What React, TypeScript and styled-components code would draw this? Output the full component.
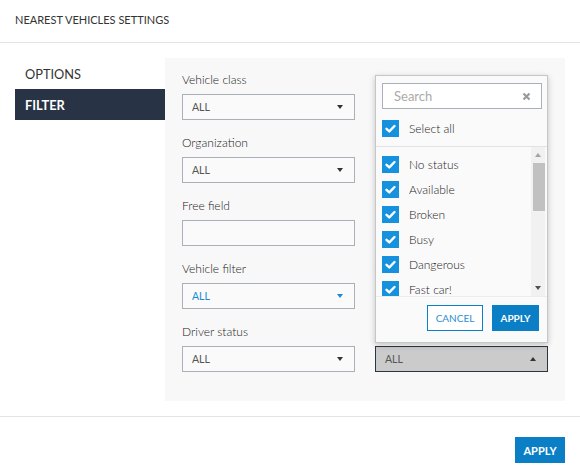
import styled, { createGlobalStyle } from "styled-components";

const colors = {
  text: "#333333",
  navy: "#283445",
  blue: "#0a7fc6",
  lightBlue: "#1a8ad4",
  check: "#1591dd",
  border: "#a9b0b8",
  line: "#e4e4e4",
  panel: "#f8f8f8",
};

const GlobalStyle = createGlobalStyle`
  body {
    margin: 0;
    background: white;
    font-family: Lato, "Liberation Sans", sans-serif;
    color: ${colors.text};
  }
`;

const Dialog = styled.div`
  width: 580px;
  height: 476px;
  display: flex;
  flex-direction: column;
  overflow: hidden;
`;

const Header = styled.div`
  flex-shrink: 0;
  height: 43px;
  box-sizing: border-box;
  padding: 0 15px 3px;
  display: flex;
  align-items: center;
  border-bottom: 1px solid ${colors.line};
  font-size: 11px;
  text-transform: uppercase;
`;

const Body = styled.div`
  flex-shrink: 0;
  display: flex;
  padding: 15px;
`;

const Nav = styled.div`
  width: 150px;
  display: flex;
  flex-direction: column;
`;

const NavItem = styled.div<{ $active?: boolean }>`
  height: 31px;
  padding-left: 10px;
  display: flex;
  align-items: center;
  font-size: 12.8px;
  text-transform: uppercase;
  background: ${(p) => (p.$active ? colors.navy : "transparent")};
  color: ${(p) => (p.$active ? "white" : colors.text)};
  font-weight: ${(p) => (p.$active ? 700 : 400)};
`;

const Panel = styled.div`
  flex: 1;
  background: ${colors.panel};
  padding: 14px 17px 29px;
  display: grid;
  grid-template-columns: 173px 173px;
  column-gap: 20px;
  row-gap: 15px;
  align-content: start;
`;

const Field = styled.div`
  position: relative;
  display: flex;
  flex-direction: column;
  gap: 6px;
`;

const Label = styled.div`
  font-size: 12px;
  line-height: 16px;
  font-weight: 300;
  color: #222;
  white-space: nowrap;
`;

const SelectBox = styled.div<{ $open?: boolean; $highlight?: boolean }>`
  height: 26px;
  box-sizing: border-box;
  padding: 0 11px 0 9px;
  display: flex;
  align-items: center;
  justify-content: space-between;
  border: 1px solid ${(p) => (p.$open ? "#2c3542" : colors.border)};
  background: ${(p) => (p.$open ? "#cbcbcb" : "#fafafa")};
  color: ${(p) => (p.$highlight ? colors.lightBlue : "#555")};
  font-size: 10.5px;
  text-transform: uppercase;
`;

const Caret = styled.span<{ $up?: boolean; $color: string }>`
  width: 0;
  height: 0;
  border-left: 3.5px solid transparent;
  border-right: 3.5px solid transparent;
  border-top: ${(p) => (p.$up ? "none" : `4px solid ${p.$color}`)};
  border-bottom: ${(p) => (p.$up ? `4px solid ${p.$color}` : "none")};
`;

const TextInput = styled.input`
  height: 26px;
  box-sizing: border-box;
  margin: 0;
  border: 1px solid ${colors.border};
  background: #fafafa;
  outline: none;
`;

const Popup = styled.div`
  position: absolute;
  left: 0;
  right: 0;
  bottom: 29px;
  height: 268px;
  box-sizing: border-box;
  z-index: 2;
  display: flex;
  flex-direction: column;
  background: #fafafa;
  border: 1px solid #c6c6c6;
  box-shadow: 0 2px 6px rgba(0, 0, 0, 0.22);
`;

const SearchBox = styled.div`
  margin: 7px 5px 0 6px;
  height: 26px;
  flex-shrink: 0;
  box-sizing: border-box;
  padding: 0 10px 0 11px;
  display: flex;
  align-items: center;
  justify-content: space-between;
  border: 1px solid ${colors.border};
  background: white;
  font-size: 13px;
  color: #aaa;
`;

const SelectAll = styled.div`
  flex-shrink: 0;
  padding: 7px 0 5px 6px;
  border-bottom: 1px solid #e2e2e2;
`;

const CheckRow = styled.div`
  height: 25px;
  flex-shrink: 0;
  display: flex;
  align-items: center;
  gap: 10px;
  font-size: 12px;
  font-weight: 300;
  color: #222;
`;

const ListArea = styled.div`
  height: 149px;
  flex-shrink: 0;
  display: flex;
  border-bottom: 1px solid #ececec;
`;

const Items = styled.div`
  flex: 1;
  overflow: hidden;
  padding: 5px 0 0 6px;
  display: flex;
  flex-direction: column;
`;

const Scrollbar = styled.div`
  width: 14px;
  margin-right: 2px;
  display: flex;
  flex-direction: column;
  align-items: flex-end;
  background: #f1f1f1;
`;

const ScrollArrow = styled.div`
  width: 14px;
  height: 16px;
  display: flex;
  align-items: center;
  justify-content: center;
`;

const Thumb = styled.div`
  width: 12px;
  height: 48px;
  background: #c1c1c1;
`;

const Spacer = styled.div`
  flex: 1;
`;

const PopupFooter = styled.div`
  display: flex;
  justify-content: flex-end;
  gap: 9px;
  padding: 8px 8px 0 0;
`;

const Button = styled.button<{ $outline?: boolean; $width: number; $size: number }>`
  width: ${(p) => p.$width}px;
  height: 26px;
  box-sizing: border-box;
  margin: 0;
  padding: 0;
  white-space: nowrap;
  border: 1px solid ${colors.blue};
  border-radius: 0;
  background: ${(p) => (p.$outline ? "white" : colors.blue)};
  color: ${(p) => (p.$outline ? "#2b8ed3" : "white")};
  font-family: Lato, "Liberation Sans", sans-serif;
  font-size: ${(p) => p.$size}px;
  font-weight: ${(p) => (p.$outline ? 400 : 700)};
  text-transform: uppercase;
`;

const Footer = styled.div`
  flex-shrink: 0;
  border-top: 1px solid ${colors.line};
  display: flex;
  justify-content: flex-end;
  padding: 20px 15px 12px;
`;

const CheckIcon = () => (
  <svg width="17" height="17" viewBox="0 0 17 17">
    <rect width="17" height="17" fill={colors.check} />
    <path
      d="M4.5 8.8 L7.3 11.4 L12.5 6"
      fill="none"
      stroke="white"
      strokeWidth="2.4"
      strokeLinecap="round"
      strokeLinejoin="round"
    />
  </svg>
);

const ClearIcon = () => (
  <svg width="9" height="9" viewBox="0 0 9 9">
    <path d="M1.5 1.5 L7.5 7.5 M7.5 1.5 L1.5 7.5" stroke="#9a9a9a" strokeWidth="2.2" />
  </svg>
);

type SelectProps = { open?: boolean; highlight?: boolean };

const Select = ({ open, highlight }: SelectProps) => (
  <SelectBox $open={open} $highlight={highlight}>
    <span>All</span>
    <Caret $up={open} $color={highlight ? colors.lightBlue : "#333"} />
  </SelectBox>
);

const statuses = ["No status", "Available", "Broken", "Busy", "Dangerous", "Fast car!"];

const StatusPopup = () => (
  <Popup>
    <SearchBox>
      <span>Search</span>
      <ClearIcon />
    </SearchBox>
    <SelectAll>
      <CheckRow>
        <CheckIcon />
        <span>Select all</span>
      </CheckRow>
    </SelectAll>
    <ListArea>
      <Items>
        {statuses.map((s) => (
          <CheckRow key={s}>
            <CheckIcon />
            <span>{s}</span>
          </CheckRow>
        ))}
      </Items>
      <Scrollbar>
        <ScrollArrow>
          <Caret $up $color="#a3a3a3" />
        </ScrollArrow>
        <Thumb />
        <Spacer />
        <ScrollArrow>
          <Caret $color="#505050" />
        </ScrollArrow>
      </Scrollbar>
    </ListArea>
    <PopupFooter>
      <Button $outline $width={56} $size={10}>
        Cancel
      </Button>
      <Button $width={47} $size={10}>
        Apply
      </Button>
    </PopupFooter>
  </Popup>
);

export default function App() {
  return (
    <>
      <GlobalStyle />
      <Dialog>
        <Header>Nearest vehicles settings</Header>
        <Body>
          <Nav>
            <NavItem>Options</NavItem>
            <NavItem $active>Filter</NavItem>
          </Nav>
          <Panel>
            <Field>
              <Label>Vehicle class</Label>
              <Select />
            </Field>
            <Field>
              <Label>Vehicle status</Label>
              <Select />
            </Field>
            <Field>
              <Label>Organization</Label>
              <Select />
            </Field>
            <Field>
              <Label>Vehicle type</Label>
              <Select />
            </Field>
            <Field>
              <Label>Free field</Label>
              <TextInput />
            </Field>
            <Field>
              <Label>Shift</Label>
              <Select />
            </Field>
            <Field>
              <Label>Vehicle filter</Label>
              <Select highlight />
            </Field>
            <Field>
              <Label>Vehicle group</Label>
              <Select />
            </Field>
            <Field>
              <Label>Driver status</Label>
              <Select />
            </Field>
            <Field>
              <Label>Order status</Label>
              <Select open />
              <StatusPopup />
            </Field>
          </Panel>
        </Body>
        <Footer>
          <Button $width={50} $size={11}>
            Apply
          </Button>
        </Footer>
      </Dialog>
    </>
  );
}
